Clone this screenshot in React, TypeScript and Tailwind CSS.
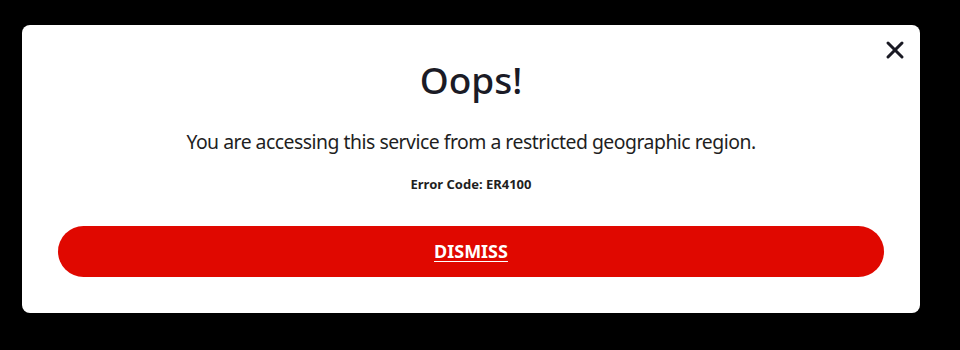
import { X } from "lucide-react";

export default function App() {
  return (
    <div className="flex h-[350px] w-[960px] items-start justify-start bg-black pl-[22px] pt-[25px]">
      <div className="relative flex h-[288px] w-[898px] flex-col items-center rounded-lg bg-white px-9 pt-[31px] [font-family:'Noto_Sans',sans-serif]">
        <button className="absolute right-[11px] top-[11px] text-[#1a1a24]">
          <X className="h-7 w-7" strokeWidth={2.6} />
        </button>
        <h1 className="text-[37px] leading-[48px] font-medium text-[#1b1b26]">
          Oops!
        </h1>
        <p className="mt-[24px] text-[19.4px] leading-[28px] tracking-[-0.5px] text-[#1f1f1f]">
          You are accessing this service from a restricted geographic region.
        </p>
        <p className="mt-[19px] text-[13px] leading-[18px] font-bold text-[#1f1f1f]">
          Error Code: ER4100
        </p>
        <button className="mt-[33px] flex h-[51px] w-full items-center justify-center rounded-full bg-[#e00800] text-[18px] font-bold text-white underline underline-offset-[3px]">
          DISMISS
        </button>
      </div>
    </div>
  );
}
